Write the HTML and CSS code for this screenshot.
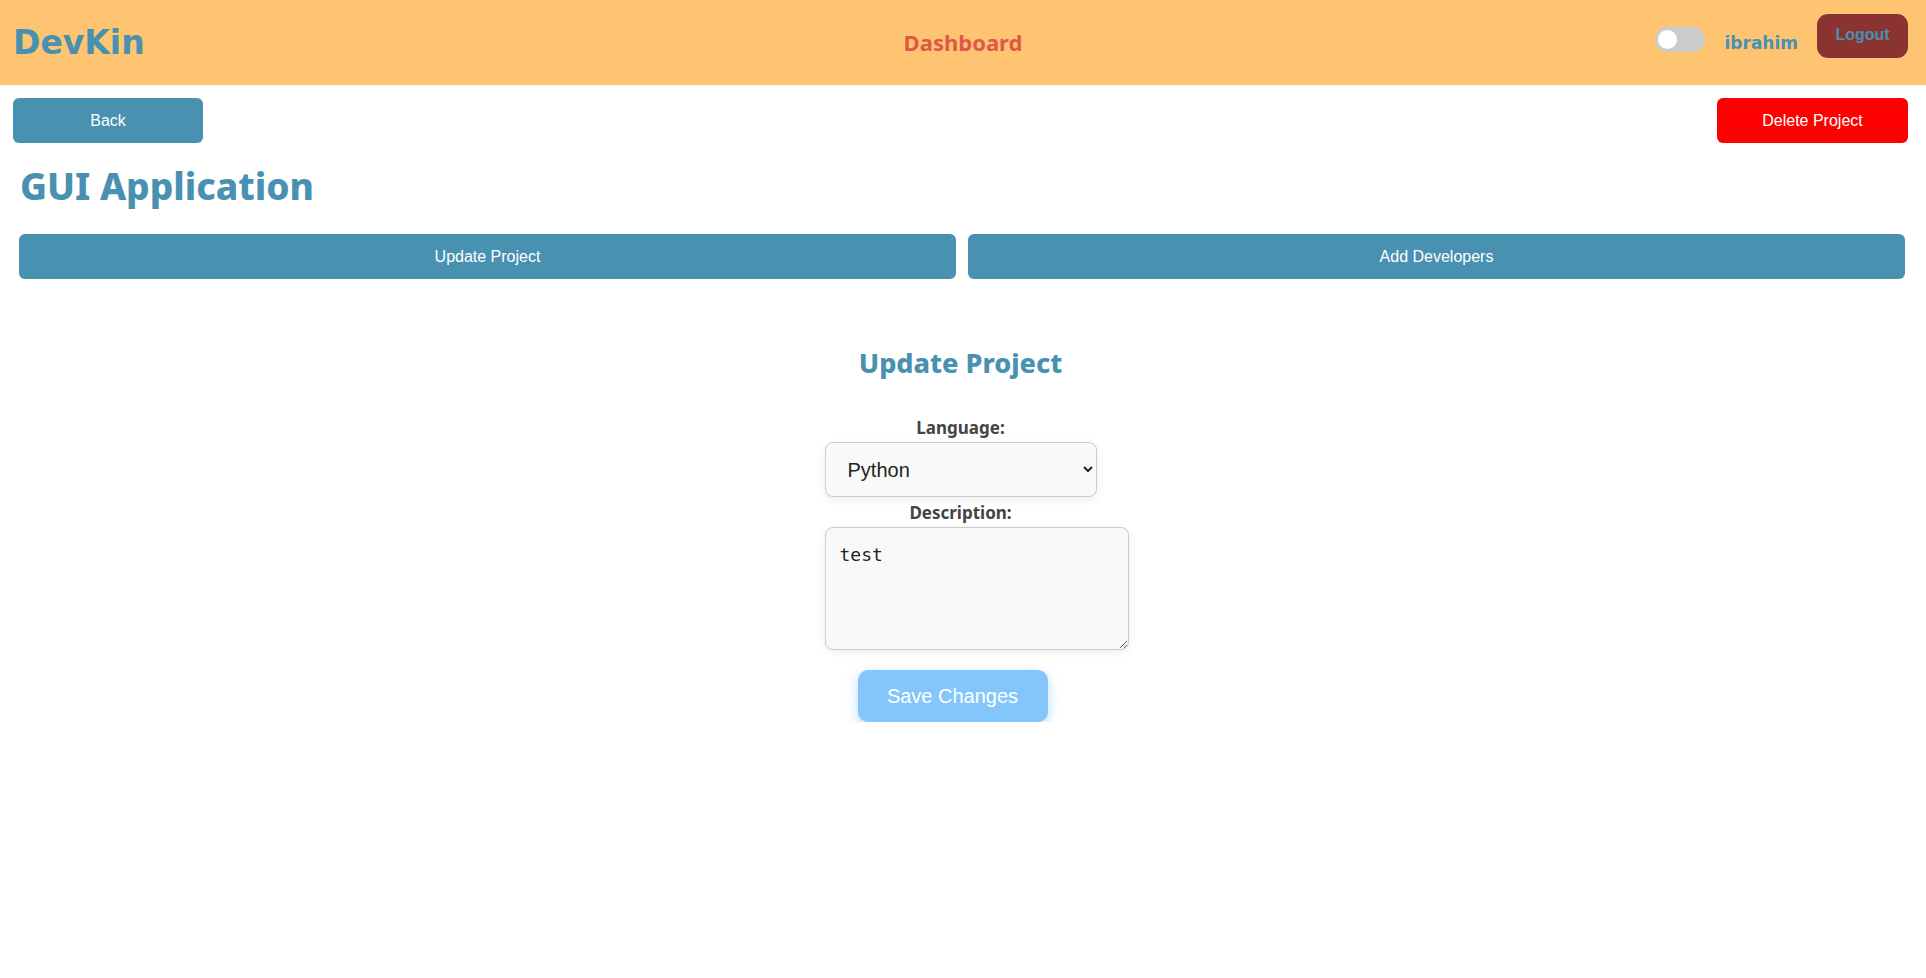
FILE: index.html
```html
<!DOCTYPE html>
<html>
<head>
<meta charset="utf-8">
<title>DevKin</title>
<link rel="stylesheet" href="styles.css">
</head>
<body>
<header class="navbar">
  <div class="brand">DevKin</div>
  <div class="nav-center">Dashboard</div>
  <div class="nav-right">
    <span class="toggle"><span class="knob"></span></span>
    <span class="user">ibrahim</span>
    <button class="logout">Logout</button>
  </div>
</header>
<main class="page">
  <div class="top-actions">
    <button class="btn btn-back">Back</button>
    <button class="btn btn-delete">Delete Project</button>
  </div>
  <h1 class="title">GUI Application</h1>
  <div class="tabs">
    <button class="btn tab">Update Project</button>
    <button class="btn tab">Add Developers</button>
  </div>
  <section class="form-section">
    <h2 class="form-title">Update Project</h2>
    <form class="form">
      <label class="label">Language:</label>
      <select class="select"><option>Python</option></select>
      <label class="label label-desc">Description:</label>
      <textarea class="textarea">test</textarea>
      <button type="button" class="save">Save Changes</button>
    </form>
  </section>
</main>
</body>
</html>
```
FILE: styles.css
```css
* { box-sizing: border-box; }
body {
  margin: 0;
  font-family: "Liberation Sans", Arial, sans-serif;
  background: #fff;
}
.navbar {
  height: 85px;
  background: #fec471;
  display: flex;
  align-items: center;
  justify-content: space-between;
  padding: 0 18px 0 13px;
  position: relative;
}
.brand {
  font-family: "DejaVu Sans", Verdana, sans-serif;
  font-weight: 700;
  font-size: 33px;
  color: #4891b0;
  margin-top: 0;
}
.nav-center {
  position: absolute;
  left: 0; right: 0;
  text-align: center;
  font-family: "Noto Sans", sans-serif;
  font-weight: 700;
  font-size: 22px;
  color: #e0574a;
  pointer-events: none;
  margin-top: -2px;
}
.nav-right {
  display: flex;
  align-items: center;
}
.toggle {
  width: 50px;
  height: 25px;
  border-radius: 13px;
  background: #cccccc;
  position: relative;
  display: inline-block;
  margin-top: -6px;
}
.knob {
  position: absolute;
  left: 3px; top: 3px;
  width: 19px; height: 19px;
  border-radius: 50%;
  background: #fff;
}
.user {
  font-family: "DejaVu Sans", Verdana, sans-serif;
  font-weight: 700;
  font-size: 17px;
  color: #4891b0;
  margin-left: 20px;
  margin-top: 1px;
}
.logout {
  margin-left: 19px;
  width: 91px;
  height: 44px;
  border: none;
  border-radius: 11px;
  background: #8b3330;
  color: #4891b0;
  font-family: "Liberation Sans", Arial, sans-serif;
  font-weight: 700;
  font-size: 16px;
  margin-top: -14px;
  padding: 0 0 2px;
}
.page { padding: 13px 18px 0 13px; }
.top-actions {
  display: flex;
  justify-content: space-between;
}
.btn {
  border: none;
  color: #fff;
  font-family: "Liberation Sans", Arial, sans-serif;
  font-size: 16px;
  border-radius: 6px;
  cursor: pointer;
}
.btn-back { width: 190px; height: 45px; background: #4891b0; }
.btn-delete { width: 191px; height: 45px; background: #ff0000; }
.title {
  font-family: "Noto Sans", sans-serif;
  font-weight: 800;
  font-size: 37px;
  color: #4891b0;
  margin: 19px 0 0 7px;
  line-height: 48px;
}
.tabs {
  display: grid;
  grid-template-columns: 1fr 1fr;
  gap: 12px;
  margin: 24px 3px 0 6px;
}
.tab { height: 45px; background: #4891b0; }
.form-section {
  display: flex;
  flex-direction: column;
  align-items: center;
  margin-top: 64px;
}
.form-title {
  font-family: "Noto Sans", sans-serif;
  font-weight: 800;
  font-size: 27px;
  color: #4891b0;
  margin: 0;
  line-height: 40px;
}
.form {
  display: flex;
  flex-direction: column;
  align-items: center;
  margin-top: 34px;
}
.label {
  font-family: "Noto Sans", sans-serif;
  font-weight: 700;
  font-size: 17px;
  color: #444;
  line-height: 22px;
}
.label-desc { margin-top: 5px; }
.select {
  width: 272px;
  height: 55px;
  margin: 3px 0 0;
  padding: 0 14px 0 18px;
  border: 1px solid #ccc;
  border-radius: 8px;
  background: #f9f9f9;
  font-family: "Liberation Sans", Arial, sans-serif;
  font-size: 20px;
  color: #222;
  box-shadow: 0 2px 8px rgba(0,0,0,0.08);
}
.textarea {
  width: 304px;
  height: 123px;
  margin: 3px 0 0 32px;
  padding: 16px 14px;
  border: 1px solid #ccc;
  border-radius: 8px;
  background: #f9f9f9;
  font-family: "DejaVu Sans Mono", monospace;
  font-size: 18px;
  color: #222;
  resize: vertical;
  box-shadow: 0 2px 8px rgba(0,0,0,0.08);
}
.save {
  margin: 20px 16px 0 0;
  width: 190px;
  height: 52px;
  border: none;
  border-radius: 10px;
  background: #84c6fc;
  color: #fff;
  font-family: "Liberation Sans", Arial, sans-serif;
  font-size: 20px;
  box-shadow: 0 4px 12px rgba(132,198,252,0.6);
}
```
